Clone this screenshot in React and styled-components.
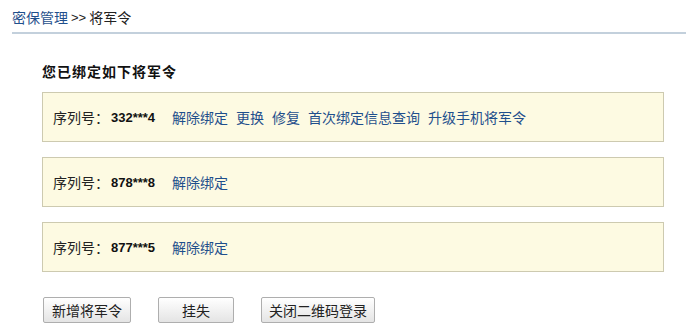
import styled, { createGlobalStyle } from "styled-components";

const GlobalStyle = createGlobalStyle`
  html, body {
    margin: 0;
    padding: 0;
    background: #fff;
  }
  body {
    font-family: "Liberation Sans", "Noto Sans CJK SC", sans-serif;
    font-size: 14px;
    color: #222;
  }
`;

const Page = styled.div`
  width: 686px;
  height: 336px;
  overflow: hidden;
`;

const Crumb = styled.div`
  margin-left: 12px;
  height: 34px;
  display: flex;
  align-items: center;
  padding-top: 2px;
  box-sizing: border-box;
  border-bottom: 2px solid #c3d0dc;
  font-family: "Noto Sans CJK SC", sans-serif;
  font-size: 14px;
  color: #222;
`;

const CrumbLink = styled.a`
  color: #1f4f8c;
  text-decoration: none;
  cursor: pointer;
`;

const Sep = styled.span`
  margin: 0 3px;
  font-family: "Liberation Sans", sans-serif;
  font-size: 13px;
`;

const Content = styled.div`
  padding: 0 22px 0 42px;
`;

const Title = styled.h3`
  margin: 0;
  height: 26px;
  padding-top: 24px;
  font-family: "Noto Sans CJK SC", sans-serif;
  font-size: 14px;
  font-weight: bold;
  letter-spacing: 1px;
  color: #111;
  line-height: 26px;
`;

const List = styled.div`
  margin-top: 8px;
  display: flex;
  flex-direction: column;
  gap: 15px;
`;

const Item = styled.div`
  height: 48px;
  background: #fdfae2;
  border: 1px solid #cdcab0;
  display: flex;
  align-items: center;
  padding-left: 10px;
`;

const Label = styled.span`
  font-family: "Noto Sans CJK SC", sans-serif;
  font-size: 14px;
  color: #222;
`;

const Serial = styled.b`
  font-family: "Liberation Sans", sans-serif;
  font-size: 13px;
  font-weight: bold;
  color: #111;
  margin: 0 17px 0 2px;
`;

const Action = styled.a`
  font-family: "Noto Sans CJK SC", sans-serif;
  font-size: 14px;
  color: #1f4f8c;
  text-decoration: none;
  margin-right: 8px;
  cursor: pointer;
`;

const Buttons = styled.div`
  margin-top: 25px;
  display: flex;
  gap: 27px;
  padding-left: 1px;
`;

const Button = styled.button`
  height: 26px;
  padding: 0 ${(p) => p.$pad}px;
  border: 1px solid #aeaeae;
  border-radius: 2px;
  background: linear-gradient(#ffffff, #e4e4e4);
  font-family: "Noto Sans CJK SC", sans-serif;
  font-size: 14px;
  color: #222;
  cursor: pointer;
`;

const tokens = [
  { serial: "332***4", actions: ["解除绑定", "更换", "修复", "首次绑定信息查询", "升级手机将军令"] },
  { serial: "878***8", actions: ["解除绑定"] },
  { serial: "877***5", actions: ["解除绑定"] },
];

export default function App() {
  return (
    <Page>
      <GlobalStyle />
      <Crumb>
        <CrumbLink>密保管理</CrumbLink>
        <Sep>&gt;&gt;</Sep>
        <span>将军令</span>
      </Crumb>
      <Content>
        <Title>您已绑定如下将军令</Title>
        <List>
          {tokens.map((t) => (
            <Item key={t.serial}>
              <Label>序列号：</Label>
              <Serial>{t.serial}</Serial>
              {t.actions.map((a) => (
                <Action key={a}>{a}</Action>
              ))}
            </Item>
          ))}
        </List>
        <Buttons>
          <Button $pad={8}>新增将军令</Button>
          <Button $pad={23}>挂失</Button>
          <Button $pad={7}>关闭二维码登录</Button>
        </Buttons>
      </Content>
    </Page>
  );
}
